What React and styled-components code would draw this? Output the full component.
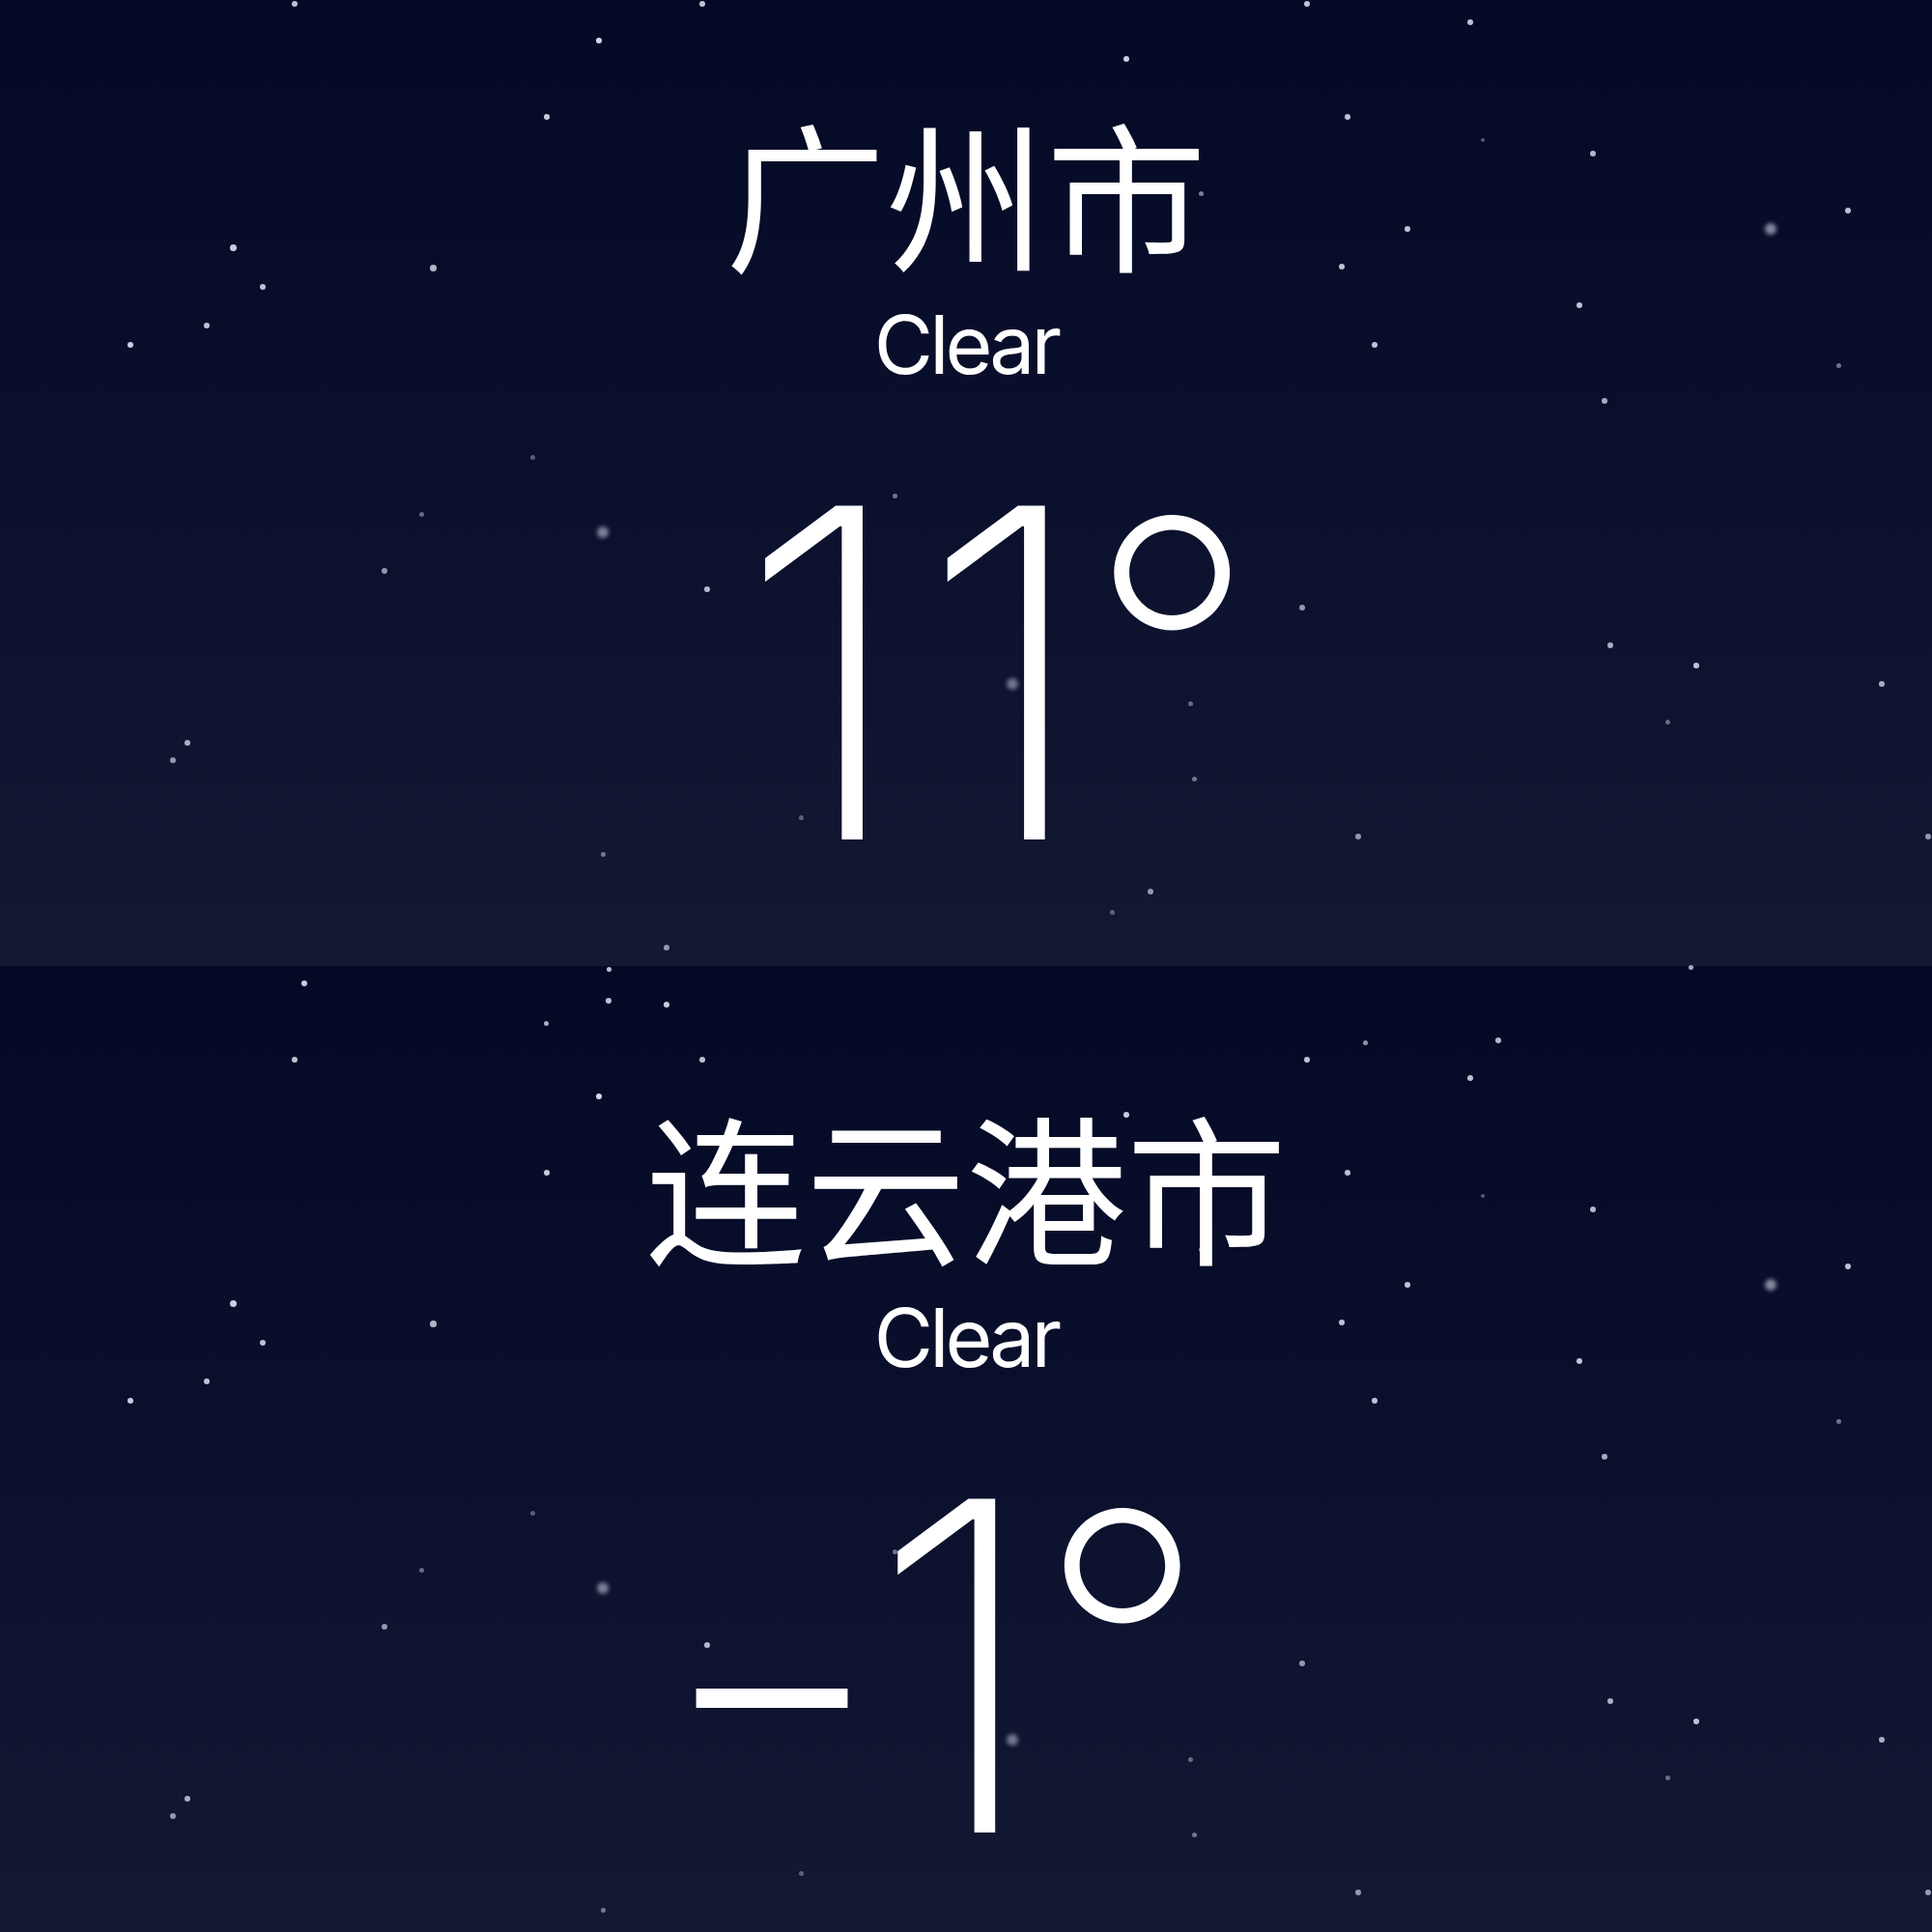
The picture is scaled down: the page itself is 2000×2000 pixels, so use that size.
import React from "react";
import styled, { createGlobalStyle } from "styled-components";

const GlobalStyle = createGlobalStyle`
  html, body {
    margin: 0;
    padding: 0;
    background: #050a24;
  }
  body {
    font-family: "Inter", "Noto Sans CJK SC", sans-serif;
    color: #fff;
  }
`;

const Page = styled.main`
  width: 2000px;
  display: flex;
  flex-direction: column;
`;

const Panel = styled.section`
  position: relative;
  height: 1000px;
  overflow: hidden;
  background: linear-gradient(180deg, #040925 0%, #0a0f2c 45%, #131833 100%);
  display: flex;
  flex-direction: column;
  align-items: center;
  padding-top: ${(p) => p.$top}px;
  box-sizing: border-box;
`;

const StarField = styled.div`
  position: absolute;
  left: 0;
  top: ${(p) => p.$shift}px;
  width: 2000px;
  height: 1000px;
  pointer-events: none;
`;

const Star = styled.span`
  position: absolute;
  width: ${(p) => p.$size}px;
  height: ${(p) => p.$size}px;
  margin-left: ${(p) => -p.$size / 2}px;
  margin-top: ${(p) => -p.$size / 2}px;
  border-radius: 50%;
  background: rgba(235, 240, 255, ${(p) => p.$alpha});
  filter: blur(${(p) => p.$blur}px);
`;

const City = styled.h1`
  position: relative;
  margin: 0;
  font-family: "Noto Sans CJK SC", sans-serif;
  font-weight: 400;
  font-size: 166px;
  line-height: 1.2;
`;

const Condition = styled.p`
  position: relative;
  margin: 19px 0 0;
  font-family: "Inter", sans-serif;
  font-weight: 400;
  font-size: 84px;
  line-height: 1;
  letter-spacing: -4px;
`;

const Temperature = styled.div`
  position: relative;
  margin-top: 60px;
  margin-left: ${(p) => p.$nudge}px;
  font-family: "Inter", sans-serif;
  font-weight: 150;
  font-size: 475px;
  line-height: 1;
  white-space: nowrap;
`;

const Digits = styled.span`
  letter-spacing: 8px;
`;

const Minus = styled.span`
  display: inline-block;
  letter-spacing: -13px;
  transform-origin: 80% 50%;
  transform: translateY(9px) scaleX(1.15);
`;

const Degree = styled.span`
  display: inline-block;
  vertical-align: top;
  font-size: 390px;
  line-height: 1;
  margin-top: 24px;
  margin-left: -15px;
`;

// star coordinates in the star-field space (px)
const STARS = [
  [315, -75, 6, 0.85, 0], [630, -90, 5, 0.8, 0], [630, -57, 6, 0.8, 0], [690, -53, 6, 0.85, 0],
  [565, -34, 5, 0.7, 0], [1551, -16, 6, 0.75, 0], [1413, -14, 5, 0.6, 0], [1750, -92, 5, 0.7, 0],
  [305, 4, 6, 0.8, 0], [620, 42, 6, 0.9, 0], [727, 4, 6, 0.8, 0], [1353, 4, 6, 0.8, 0],
  [1522, 23, 6, 0.8, 0], [1166, 61, 6, 0.85, 0], [566, 121, 6, 0.85, 0], [1395, 121, 6, 0.8, 0],
  [1649, 159, 6, 0.75, 0], [241, 256, 7, 0.85, 0], [272, 297, 6, 0.8, 0], [214, 337, 6, 0.8, 0],
  [135, 357, 6, 0.85, 0], [448, 277, 7, 0.75, 0], [1457, 237, 6, 0.8, 0], [1389, 276, 6, 0.8, 0],
  [1833, 237, 12, 0.55, 2], [1913, 218, 6, 0.8, 0], [1635, 316, 6, 0.8, 0], [1423, 357, 6, 0.8, 0],
  [1903, 378, 5, 0.45, 0], [1661, 415, 6, 0.7, 0], [551, 473, 5, 0.35, 0], [436, 532, 5, 0.4, 0],
  [624, 551, 12, 0.5, 2], [926, 513, 5, 0.45, 0], [398, 591, 6, 0.6, 0], [732, 610, 6, 0.75, 0],
  [1348, 629, 6, 0.6, 0], [1232, 728, 5, 0.4, 0], [1667, 668, 6, 0.7, 0], [1756, 689, 6, 0.8, 0],
  [1948, 708, 6, 0.7, 0], [1048, 708, 12, 0.45, 2], [194, 769, 6, 0.7, 0], [179, 787, 6, 0.6, 0],
  [1726, 747, 5, 0.4, 0], [1236, 806, 5, 0.45, 0], [829, 846, 5, 0.35, 0], [1406, 866, 6, 0.6, 0],
  [1996, 866, 6, 0.6, 0], [624, 884, 5, 0.45, 0], [1191, 923, 6, 0.6, 0], [1151, 944, 5, 0.35, 0],
  [690, 981, 6, 0.6, 0], [1750, 1001, 5, 0.6, 0], [1243, 200, 5, 0.5, 0], [1535, 145, 4, 0.35, 0],
];

const CITIES = [
  { name: "广州市", condition: "Clear", sign: "", value: "11", top: 97, starShift: 0, nudge: 64 },
  { name: "连云港市", condition: "Clear", sign: "-", value: "1", top: 125, starShift: 93, nudge: -49 },
];

function Stars({ shift }) {
  return (
    <StarField $shift={shift}>
      {STARS.map(([x, y, s, a, b], i) => (
        <Star key={i} $size={s} $alpha={a} $blur={b} style={{ left: x, top: y }} />
      ))}
    </StarField>
  );
}

export default function App() {
  return (
    <>
      <GlobalStyle />
      <Page>
        {CITIES.map((c) => (
          <Panel key={c.name} $top={c.top}>
            <Stars shift={c.starShift} />
            <City>{c.name}</City>
            <Condition>{c.condition}</Condition>
            <Temperature $nudge={c.nudge}>
              {c.sign && <Minus>{c.sign}</Minus>}
              <Digits>{c.value}</Digits>
              <Degree>°</Degree>
            </Temperature>
          </Panel>
        ))}
      </Page>
    </>
  );
}
